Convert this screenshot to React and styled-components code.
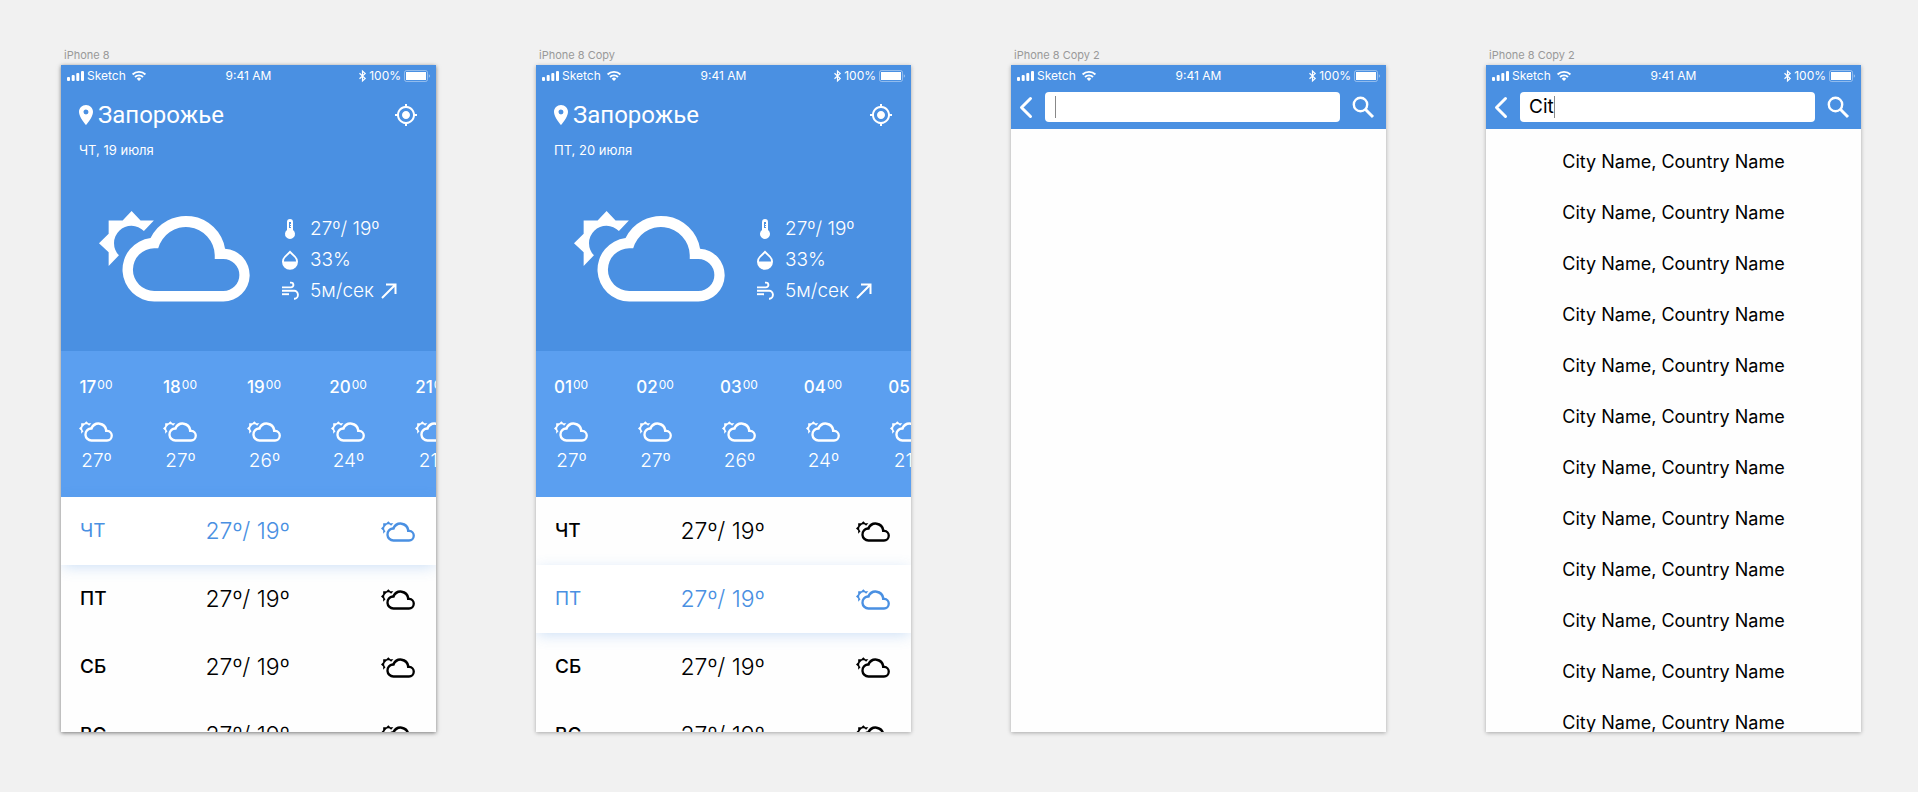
import React from 'react';
import styled, { createGlobalStyle, css } from 'styled-components';

const blue = '#4a90e2';
const lightBlue = '#5b9ff0';

const GlobalStyle = createGlobalStyle`
  *, *::before, *::after { box-sizing: border-box; }
  body {
    margin: 0;
    background: #f1f1f1;
    color: #000;
    font-family: Inter, "Liberation Sans", sans-serif;
    -webkit-font-smoothing: antialiased;
  }
  button {
    border: 0;
    padding: 0;
    background: none;
    color: inherit;
    font: inherit;
    cursor: pointer;
  }
  ul { list-style: none; margin: 0; padding: 0; }
  h1, h2, p { margin: 0; font-weight: 400; }
  svg { display: block; flex: none; overflow: visible; }
`;

const Canvas = styled.main`
  display: grid;
  grid-template-columns: repeat(4, minmax(0, 1fr));
  align-items: start;
  gap: 100px;
  padding: 47px 57px 40px 61px;
`;

const Artboard = styled.section`
  display: flex;
  flex-direction: column;
`;

const ArtboardName = styled.h2`
  padding-left: 3px;
  font-size: 11px;
  line-height: 16px;
  color: #999;
  margin-bottom: 2px;
`;

const Screen = styled.div`
  aspect-ratio: 375 / 667;
  min-height: 0;
  overflow: hidden;
  background: #fefefe;
  box-shadow: 0 1px 4px rgba(0, 0, 0, ${(p) => (p.$selected ? 0.5 : 0.3)});
`;

const Status = styled.div`
  display: grid;
  grid-template-columns: 1fr auto 1fr;
  align-items: center;
  height: 20px;
  padding: 2px 6px 0;
  font-size: 12px;
  line-height: 18px;
  color: #fff;
`;

const StatusGroup = styled.div`
  display: flex;
  align-items: center;
  justify-content: ${(p) => (p.$end ? 'flex-end' : 'flex-start')};
  gap: 3px;
`;

const Carrier = styled.span`
  margin-right: 3px;
`;

const Hero = styled.header`
  height: 286px;
  background: ${blue};
  color: #fff;
`;

const TitleBar = styled.div`
  display: flex;
  align-items: center;
  justify-content: space-between;
  padding: 16px 19px 0 18px;
`;

const City = styled.h1`
  display: flex;
  align-items: center;
  gap: 5px;
  font: 400 24px/28px Roboto, sans-serif;
`;

const DateLine = styled.p`
  padding: 11px 18px 0;
  font-size: 13px;
  line-height: 20px;
`;

const Current = styled.div`
  display: flex;
  gap: 32px;
  padding: 51px 38px 0;
`;

const Stats = styled.ul`
  padding-top: 2px;
  font-size: 19px;
  font-weight: 300;
  line-height: 31px;
`;

const Stat = styled.li`
  display: flex;
  align-items: center;
  gap: 12px;
  white-space: nowrap;
`;

const StatValue = styled.span`
  display: flex;
  align-items: center;
  gap: 7px;
`;

const Hours = styled.ul`
  display: flex;
  gap: 48px;
  height: 146px;
  padding: 23px 0 0 17px;
  overflow: hidden;
  background: ${lightBlue};
  color: #fff;
`;

const Hour = styled.li`
  flex: 0 0 36px;
  min-width: 0;
  display: flex;
  flex-direction: column;
  align-items: center;
`;

const HourTime = styled.span`
  display: flex;
  gap: 1px;
  margin-bottom: 22px;
  padding-top: 1px;
  font-size: 17px;
  font-weight: 500;
  line-height: 24px;
`;

const Minutes = styled.span`
  font-size: 12px;
  font-weight: 400;
  line-height: 20px;
`;

const HourTemp = styled.span`
  margin-top: 7px;
  padding-left: 1px;
  font-size: 19px;
  font-weight: 300;
  line-height: 24px;
`;

const Day = styled.button`
  position: relative;
  display: grid;
  grid-template-columns: 1fr auto 1fr;
  align-items: center;
  width: 100%;
  height: 68px;
  padding: 0 21px 0 19px;
  text-align: left;
  font-weight: 500;
  ${(p) =>
    p.$active &&
    css`
      z-index: 1;
      background: #fff;
      color: ${blue};
      font-weight: 400;
      box-shadow: 0 3px 14px -2px rgba(74, 144, 226, 0.3);
    `}
`;

const DayName = styled.span`
  font-size: 19px;
  line-height: 24px;
`;

const DayTemp = styled.span`
  font-size: 23px;
  font-weight: 300;
  line-height: 28px;
`;

const DayIcon = styled.span`
  justify-self: end;
`;

const SearchHeader = styled.header`
  background: ${blue};
  color: #fff;
`;

const SearchForm = styled.form`
  display: flex;
  align-items: center;
  height: 44px;
  padding: 0 12px 0 9px;
`;

const Field = styled.label`
  flex: 1;
  display: flex;
  align-items: center;
  height: 30px;
  margin: 0 13px;
  padding-left: 9px;
  border-radius: 4px;
  background: #fff;
`;

const Input = styled.input`
  field-sizing: content;
  min-width: 0;
  border: 0;
  padding: 0;
  outline: 0;
  background: none;
  color: #000;
  font: 400 19px/24px Inter, "Liberation Sans", sans-serif;
`;

const Caret = styled.span`
  width: 1px;
  height: 22px;
  background: #888;
`;

const Results = styled.ul`
  padding-top: 7px;
`;

const Result = styled.button`
  display: block;
  width: 100%;
  height: 51px;
  font-size: 18px;
  line-height: 24px;
`;

function PartlyCloudy({ width, height }) {
  return (
    <svg width={width} height={height} viewBox="57 63 454 273" fill="currentColor" aria-hidden="true">
      <path d="M155 63 182 91H222L192 123A52 52 0 0 0 117 196L86 228V187L57 160 86 131V91H128Z" />
      <path
        fillRule="evenodd"
        d="M223 335A95.850 95.850 0 0 1 212 144A119 119 0 0 1 436 176A79.600 79.600 0 0 1 431 335ZM235 175H223A64 64 0 0 0 223 303H431A48 48 0 0 0 431 207H405V195A86.500 86.500 0 0 0 235 175Z"
      />
    </svg>
  );
}

const SignalIcon = () => (
  <svg width="17" height="10" viewBox="0 0 17 10" fill="#fff" aria-hidden="true">
    <rect x="0" y="6" width="3" height="4" rx="1" />
    <rect x="4.7" y="4" width="3" height="6" rx="1" />
    <rect x="9.3" y="2" width="3" height="8" rx="1" />
    <rect x="14" y="0" width="3" height="10" rx="1" />
  </svg>
);

const WifiIcon = () => (
  <svg width="14" height="10" viewBox="0 0 14 10" fill="none" stroke="#fff" strokeWidth="1.9" aria-hidden="true">
    <path d="M.6 3.500A9 9 0 0 1 13.400 3.500" />
    <path d="M3 6A5.700 5.700 0 0 1 11 6" />
    <path d="M7 10 4.700 7.700A3.200 3.200 0 0 1 9.300 7.700Z" fill="#fff" stroke="none" />
  </svg>
);

const BluetoothIcon = () => (
  <svg width="7" height="12" viewBox="0 0 7 12" fill="none" stroke="#fff" strokeWidth="1.2" aria-hidden="true">
    <path d="M.5 3.200 6.200 8.500 3.500 11V1L6.200 3.500 .5 8.800" />
  </svg>
);

const BatteryIcon = () => (
  <svg width="26" height="12" viewBox="0 0 26 12" fill="#fff" aria-hidden="true">
    <rect x=".5" y=".5" width="23" height="11" rx="2" fill="none" stroke="#fff" strokeOpacity=".4" />
    <rect x="2" y="2" width="20" height="8" />
    <path d="M24.8 4.2V7.8A2 2 0 0 0 24.8 4.2Z" fillOpacity=".5" />
  </svg>
);

const PinIcon = () => (
  <svg width="14" height="20" viewBox="5 2 14 20" fill="#fff" aria-hidden="true">
    <path d="M12 2C8.13 2 5 5.13 5 9c0 5.25 7 13 7 13s7-7.75 7-13c0-3.87-3.13-7-7-7zm0 9.500a2.500 2.500 0 0 1 0-5 2.500 2.500 0 0 1 0 5z" />
  </svg>
);

const LocateIcon = () => (
  <svg width="22" height="22" viewBox="1 1 22 22" fill="#fff" aria-hidden="true">
    <path d="M12 8c-2.210 0-4 1.790-4 4s1.790 4 4 4 4-1.790 4-4-1.790-4-4-4zm8.940 3c-.46-4.170-3.770-7.480-7.940-7.940V1h-2v2.060C6.830 3.520 3.520 6.830 3.060 11H1v2h2.060c.46 4.170 3.770 7.480 7.940 7.940V23h2v-2.060c4.170-.46 7.480-3.770 7.940-7.940H23v-2h-2.060zM12 19c-3.870 0-7-3.130-7-7s3.130-7 7-7 7 3.130 7 7-3.130 7-7 7z" />
  </svg>
);

const ThermometerIcon = () => (
  <svg width="16" height="20" viewBox="0 0 16 20" fill="#fff" aria-hidden="true">
    <path
      fillRule="evenodd"
      d="M5 3a3 3 0 0 1 6 0V10.900a5 5 0 1 1-6 0ZM7 3V9H9V8H8V7H9V6H8V5H9V3Z"
    />
  </svg>
);

const HumidityIcon = () => (
  <svg width="16" height="20" viewBox="0 0 16 20" fill="#fff" aria-hidden="true">
    <path
      fillRule="evenodd"
      d="M8 .5 13.700 6.200A8 8 0 1 1 2.300 6.200ZM2 11.500H14C14 9.500 13.300 8.300 12.200 7.300L8 3.200 3.800 7.300C2.700 8.300 2 9.500 2 11.500Z"
    />
  </svg>
);

const WindIcon = () => (
  <svg width="16" height="20" viewBox="0 0 16 20" fill="none" stroke="#fff" strokeWidth="1.900" aria-hidden="true">
    <path d="M0 6.400H9A2.400 2.400 0 0 0 9 1.600H8" />
    <path d="M0 9.800H12A3.500 4 0 0 1 12.800 17.800H12" />
    <path d="M0 13.200H7" />
  </svg>
);

const ArrowIcon = () => (
  <svg width="16" height="16" viewBox="0 0 16 16" fill="none" stroke="#fff" strokeWidth="2" aria-hidden="true">
    <path d="M1 15 14.500 1.500M5 1.500H14.500V11" />
  </svg>
);

const BackIcon = () => (
  <svg width="12" height="21" viewBox="0 0 12 21" fill="none" stroke="#fff" strokeWidth="3" strokeLinecap="round" strokeLinejoin="round" aria-hidden="true">
    <path d="M10.500 1.500 1.500 10.500 10.500 19.500" />
  </svg>
);

const SearchIcon = () => (
  <svg width="21" height="21" viewBox="0 0 21 21" fill="none" stroke="#fff" aria-hidden="true">
    <circle cx="7.500" cy="7.500" r="6.700" strokeWidth="2.400" />
    <path d="M12.300 12.300 20 20" strokeWidth="3" />
  </svg>
);

function StatusBar() {
  return (
    <Status>
      <StatusGroup>
        <SignalIcon />
        <Carrier>Sketch</Carrier>
        <WifiIcon />
      </StatusGroup>
      <span>9:41 AM</span>
      <StatusGroup $end>
        <BluetoothIcon />
        <span>100%</span>
        <BatteryIcon />
      </StatusGroup>
    </Status>
  );
}

const dayNames = ['ЧТ', 'ПТ', 'СБ', 'ВС'];
const temps = ['27º', '27º', '26º', '24º', '21º'];

function Forecast({ date, hours, activeDay }) {
  return (
    <>
      <Hero>
        <StatusBar />
        <TitleBar>
          <City>
            <PinIcon />
            Запорожье
          </City>
          <button type="button" aria-label="Моё местоположение">
            <LocateIcon />
          </button>
        </TitleBar>
        <DateLine>{date}</DateLine>
        <Current>
          <PartlyCloudy width={151} height={91} />
          <Stats>
            <Stat>
              <ThermometerIcon />
              <StatValue>27º/ 19º</StatValue>
            </Stat>
            <Stat>
              <HumidityIcon />
              <StatValue>33%</StatValue>
            </Stat>
            <Stat>
              <WindIcon />
              <StatValue>
                5м/сек
                <ArrowIcon />
              </StatValue>
            </Stat>
          </Stats>
        </Current>
      </Hero>
      <Hours>
        {hours.map((hour, i) => (
          <Hour key={hour}>
            <HourTime>
              {hour}
              <Minutes>00</Minutes>
            </HourTime>
            <PartlyCloudy width={34} height={21} />
            <HourTemp>{temps[i]}</HourTemp>
          </Hour>
        ))}
      </Hours>
      <ul>
        {dayNames.map((name) => (
          <li key={name}>
            <Day type="button" $active={name === activeDay}>
              <DayName>{name}</DayName>
              <DayTemp>27º/ 19º</DayTemp>
              <DayIcon>
                <PartlyCloudy width={34} height={21} />
              </DayIcon>
            </Day>
          </li>
        ))}
      </ul>
    </>
  );
}

function Search({ query, results }) {
  return (
    <>
      <SearchHeader>
        <StatusBar />
        <SearchForm>
          <button type="button" aria-label="Back">
            <BackIcon />
          </button>
          <Field>
            <Input type="text" aria-label="City" defaultValue={query} />
            <Caret />
          </Field>
          <button type="submit" aria-label="Search">
            <SearchIcon />
          </button>
        </SearchForm>
      </SearchHeader>
      <Results>
        {results.map((city, i) => (
          <li key={i}>
            <Result type="button">{city}</Result>
          </li>
        ))}
      </Results>
    </>
  );
}

export default function App() {
  return (
    <>
      <GlobalStyle />
      <Canvas>
        <Artboard>
          <ArtboardName>iPhone 8</ArtboardName>
          <Screen $selected>
            <Forecast date="ЧТ, 19 июля" hours={['17', '18', '19', '20', '21']} activeDay="ЧТ" />
          </Screen>
        </Artboard>
        <Artboard>
          <ArtboardName>iPhone 8 Copy</ArtboardName>
          <Screen>
            <Forecast date="ПТ, 20 июля" hours={['01', '02', '03', '04', '05']} activeDay="ПТ" />
          </Screen>
        </Artboard>
        <Artboard>
          <ArtboardName>iPhone 8 Copy 2</ArtboardName>
          <Screen>
            <Search query="" results={[]} />
          </Screen>
        </Artboard>
        <Artboard>
          <ArtboardName>iPhone 8 Copy 2</ArtboardName>
          <Screen>
            <Search query="Cit" results={Array(12).fill('City Name, Country Name')} />
          </Screen>
        </Artboard>
      </Canvas>
    </>
  );
}
